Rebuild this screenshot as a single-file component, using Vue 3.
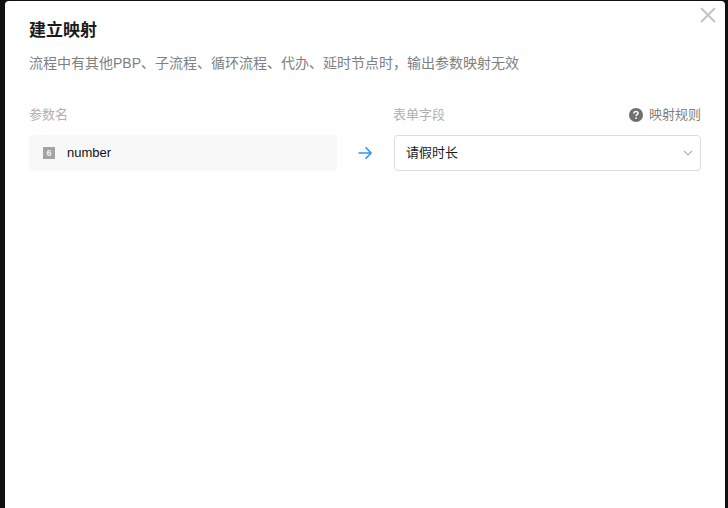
<template>
  <div class="page">
    <div class="dialog">
      <button class="close" aria-label="关闭">
        <svg width="16" height="16" viewBox="0 0 16 16"><path d="M1 1L15 15M15 1L1 15" stroke="#c4c4c4" stroke-width="2" fill="none"/></svg>
      </button>
      <h2 class="title">建立映射</h2>
      <p class="desc">流程中有其他PBP、子流程、循环流程、代办、延时节点时，输出参数映射无效</p>
      <div class="grid">
        <div class="label">参数名</div>
        <div></div>
        <div class="label label-row">
          <span>表单字段</span>
          <span class="rule">
            <svg width="14" height="14" viewBox="0 0 14 14"><circle cx="7" cy="7" r="7" fill="#6f6f6f"/><path d="M4.9 5.4C4.9 4.2 5.8 3.4 7 3.4C8.2 3.4 9.1 4.2 9.1 5.2C9.1 6.5 7 6.6 7 8.1" stroke="#fff" stroke-width="1.5" fill="none"/><rect x="6.2" y="9.2" width="1.6" height="1.6" fill="#fff"/></svg>
            映射规则
          </span>
        </div>
        <div class="param">
          <span class="type">6</span>
          <span class="name">number</span>
        </div>
        <div class="arrow">
          <svg width="16" height="14" viewBox="0 0 16 14"><path d="M1.5 7H14M8.5 1.2L14 7L8.5 12.8" stroke="#2e96f0" stroke-width="1.6" fill="none"/></svg>
        </div>
        <div class="select">
          <span class="value">请假时长</span>
          <svg width="10" height="6" viewBox="0 0 10 6"><path d="M1 1L5 5L9 1" stroke="#b5b5b5" stroke-width="1.2" fill="none"/></svg>
        </div>
      </div>
    </div>
  </div>
</template>

<script setup>
</script>

<style>
html, body { margin: 0; background: #111; overflow: hidden; }
</style>

<style scoped>
.page {
  height: 508px;
  padding: 1px 3px 0 5px;
  box-sizing: border-box;
  background: #111;
  font-family: "Liberation Sans", "Noto Sans CJK SC", sans-serif;
}
.dialog {
  position: relative;
  height: 507px;
  padding: 20px 24px 0;
  box-sizing: border-box;
  background: #fff;
  border-radius: 4px 4px 0 0;
}
.close {
  position: absolute;
  top: 6px;
  right: 9px;
  padding: 0;
  border: 0;
  background: none;
  line-height: 0;
}
.title {
  margin: 0;
  font-size: 17px;
  line-height: 20px;
  font-weight: 700;
  color: #1a1a1a;
}
.desc {
  margin: 13px 0 0;
  font-size: 14px;
  line-height: 19px;
  color: #808080;
}
.grid {
  display: grid;
  grid-template-columns: 308px 57px 307px;
  grid-template-rows: 18px 36px;
  row-gap: 11px;
  margin-top: 33px;
}
.label {
  font-size: 13px;
  line-height: 18px;
  color: #b0b0b0;
}
.label-row {
  display: flex;
  justify-content: space-between;
  margin-left: -1px;
}
.rule {
  display: flex;
  align-items: center;
  gap: 6px;
  color: #808080;
}
.param {
  display: flex;
  align-items: center;
  padding-left: 14px;
  background: #f8f8f8;
  border-radius: 4px;
}
.type {
  width: 12px;
  height: 12px;
  margin-right: 12px;
  background: #a3a3a3;
  color: #f2f2f2;
  font-size: 9px;
  font-weight: 700;
  line-height: 12px;
  text-align: center;
}
.name {
  margin-bottom: 2px;
  font-size: 13px;
  color: #111;
}
.arrow {
  display: flex;
  align-items: center;
  justify-content: center;
  padding-right: 1px;
  box-sizing: border-box;
}
.select {
  display: flex;
  align-items: center;
  justify-content: space-between;
  padding: 0 7px 0 11px;
  box-sizing: border-box;
  border: 1px solid #dcdcdc;
  border-radius: 4px;
  font-size: 13px;
  color: #1a1a1a;
}
.value {
  margin-bottom: 3px;
}
</style>
